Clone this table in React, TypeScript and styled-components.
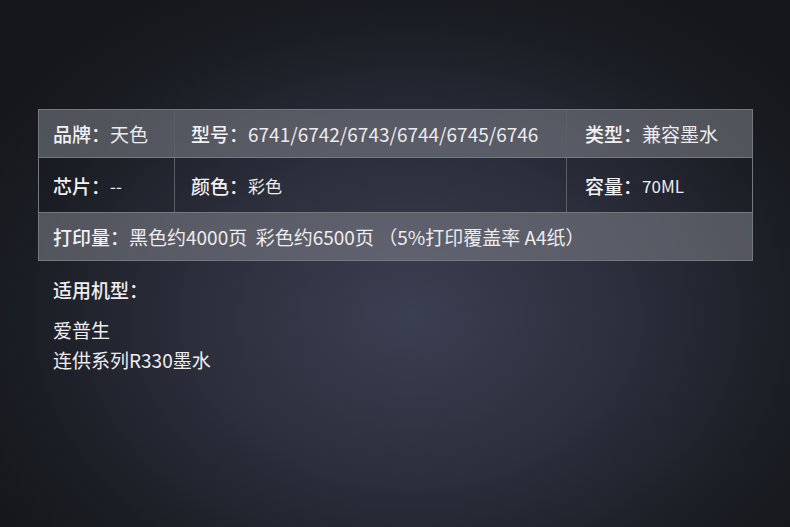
import React from 'react';
import styled, { createGlobalStyle } from 'styled-components';

const GlobalStyle = createGlobalStyle`
  html, body {
    margin: 0;
    padding: 0;
    width: 100%;
    height: 100%;
  }
  body {
    font-family: "Noto Sans CJK SC", "Noto Sans", sans-serif;
    background: #16181e;
  }
`;

interface Spec {
  label: string;
  value: string;
  small?: boolean;
}

const rows: Spec[][] = [
  [
    { label: '品牌', value: '天色' },
    { label: '型号', value: '6741/6742/6743/6744/6745/6746' },
    { label: '类型', value: '兼容墨水' },
  ],
  [
    { label: '芯片', value: '--', small: true },
    { label: '颜色', value: '彩色', small: true },
    { label: '容量', value: '70ML', small: true },
  ],
];

function App() {
  return (
    <Page>
      <GlobalStyle />
      <SpecTable>
        {rows.map((row, i) => (
          <Row key={i} $shaded={i % 2 === 0}>
            {row.map((cell) => (
              <Cell key={cell.label}>
                <Label>{cell.label}：</Label>
                <Value $small={cell.small}>{cell.value}</Value>
              </Cell>
            ))}
          </Row>
        ))}
        <WideRow>
          <Label>打印量：</Label>
          <Value>黑色约4000页  彩色约6500页 （5%打印覆盖率 A4纸）</Value>
        </WideRow>
      </SpecTable>
      <Models>
        <ModelsTitle>适用机型：</ModelsTitle>
        <ModelLine>爱普生</ModelLine>
        <ModelLine>连供系列R330墨水</ModelLine>
      </Models>
    </Page>
  );
}

const Page = styled.div`
  width: 790px;
  height: 527px;
  box-sizing: border-box;
  padding: 109px 37px 0 38px;
  background: radial-gradient(ellipse 62% 70% at 52% 60%, #3b3f52 0%, #2b2e3b 45%, #1b1d24 80%, #15171c 100%);
  color: #eeeef0;
  overflow: hidden;
`;

const SpecTable = styled.div`
  border: 1px solid #76787f;
  display: flex;
  flex-direction: column;
`;

const Row = styled.div<{ $shaded: boolean }>`
  display: grid;
  grid-template-columns: 136px 392px 1fr;
  height: ${(p) => (p.$shaded ? '47px' : '54px')};
  background: ${(p) => (p.$shaded ? 'rgba(130, 132, 140, 0.55)' : 'transparent')};
  border-bottom: 1px solid #76787f;
`;

const Cell = styled.div`
  display: flex;
  align-items: center;
  padding-left: 14px;
  border-right: 1px solid #5c5e66;
  &:nth-child(2) {
    padding-left: 16px;
  }
  &:nth-child(3) {
    padding-left: 18px;
  }
  &:last-child {
    border-right: none;
  }
`;

const WideRow = styled.div`
  display: flex;
  align-items: center;
  height: 47px;
  padding-left: 14px;
  background: rgba(130, 132, 140, 0.55);
`;

const Label = styled.span`
  font-size: 19px;
  font-weight: 500;
  color: #f2f2f4;
  white-space: nowrap;
`;

const Value = styled.span<{ $small?: boolean }>`
  font-size: ${(p) => (p.$small ? '17px' : '19px')};
  font-weight: 400;
  color: #ececee;
  white-space: pre;
`;

const Models = styled.div`
  padding: 14px 0 0 15px;
  display: flex;
  flex-direction: column;
`;

const ModelsTitle = styled.div`
  font-size: 19px;
  font-weight: 500;
  line-height: 30px;
  margin-bottom: 10px;
`;

const ModelLine = styled.div`
  font-size: 19px;
  line-height: 30px;
`;

export default App;
